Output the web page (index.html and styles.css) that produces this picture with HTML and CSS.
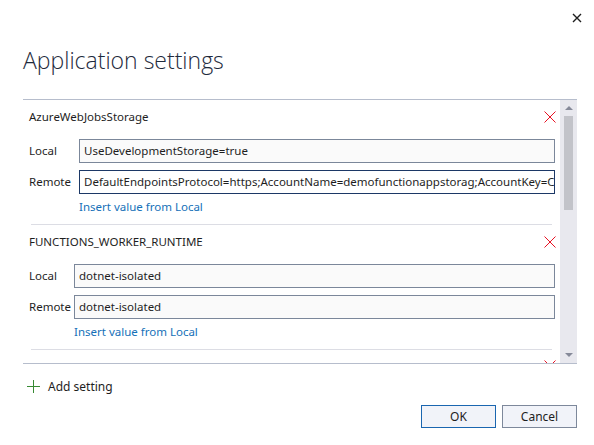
FILE: index.html
```html
<!DOCTYPE html>
<html>
<head>
<meta charset="utf-8">
<link rel="stylesheet" href="styles.css">
</head>
<body>
<div class="dialog">
  <div class="top">
    <svg class="close" width="10" height="10" viewBox="0 0 10 10"><path d="M1 1L9 9M9 1L1 9" stroke="#1e1e1e" stroke-width="1.4" fill="none"/></svg>
  </div>
  <h1 class="title">Application settings</h1>
  <div class="list">
    <div class="items">
      <div class="setting s1">
        <div class="name-row">
          <span class="name">AzureWebJobsStorage</span>
          <svg class="remove" width="12" height="12" viewBox="0 0 12 12"><path d="M0.5 0.5L11.5 11.5M11.5 0.5L0.5 11.5" stroke="#e81123" stroke-width="1" fill="none"/></svg>
        </div>
        <div class="fields">
          <label class="lbl">Local</label>
          <div class="input">UseDevelopmentStorage=true</div>
          <label class="lbl">Remote</label>
          <div class="input focus">DefaultEndpointsProtocol=https;AccountName=demofunctionappstorag;AccountKey=C</div>
          <span></span>
          <a class="link">Insert value from Local</a>
        </div>
        <div class="sep"></div>
      </div>
      <div class="setting s2">
        <div class="name-row">
          <span class="name">FUNCTIONS_WORKER_RUNTIME</span>
          <svg class="remove" width="12" height="12" viewBox="0 0 12 12"><path d="M0.5 0.5L11.5 11.5M11.5 0.5L0.5 11.5" stroke="#e81123" stroke-width="1" fill="none"/></svg>
        </div>
        <div class="fields">
          <label class="lbl">Local</label>
          <div class="input">dotnet-isolated</div>
          <label class="lbl">Remote</label>
          <div class="input">dotnet-isolated</div>
          <span></span>
          <a class="link">Insert value from Local</a>
        </div>
        <div class="sep"></div>
      </div>
      <div class="setting s3">
        <div class="name-row end">
          <svg class="remove" width="12" height="12" viewBox="0 0 12 12"><path d="M0.5 0.5L11.5 11.5M11.5 0.5L0.5 11.5" stroke="#e81123" stroke-width="1" fill="none"/></svg>
        </div>
      </div>
    </div>
    <div class="scrollbar">
      <div class="arrow up"></div>
      <div class="thumb"></div>
      <div class="track-fill"></div>
      <div class="arrow down"></div>
    </div>
  </div>
  <div class="add">
    <svg class="plus" width="13" height="13" viewBox="0 0 13 13"><path d="M6.5 0V13M0 6.5H13" stroke="#388a34" stroke-width="1" fill="none"/></svg>
    <span>Add setting</span>
  </div>
  <div class="buttons">
    <button class="btn default">OK</button>
    <button class="btn">Cancel</button>
  </div>
</div>
</body>
</html>
```

FILE: styles.css
```css
* { box-sizing: border-box; }
html, body {
  margin: 0;
  padding: 0;
  background: #ffffff;
}
body {
  font-family: "Noto Sans", "Open Sans", sans-serif;
  font-size: 11.5px;
  color: #1e1e1e;
  width: 594px;
  height: 445px;
  overflow: hidden;
}
.dialog {
  width: 594px;
  height: 445px;
  display: flex;
  flex-direction: column;
}
.top {
  height: 44px;
  display: flex;
  justify-content: flex-end;
  align-items: flex-start;
  padding: 13px 12px 0 0;
}
.title {
  margin: 0 0 23px 23px;
  font-family: "Open Sans", "Noto Sans", sans-serif;
  font-weight: 300;
  font-size: 23px;
  line-height: 32px;
  color: #1e2a3c;
}
.list {
  margin: 0 17px 0 23px;
  height: 265px;
  flex: none;
  border-top: 1px solid #b6bdcc;
  border-bottom: 1px solid #b6bdcc;
  display: flex;
}
.items {
  flex: 1;
  overflow: hidden;
}
.setting {
  padding: 9px 4px 0 6px;
}
.name-row {
  display: flex;
  justify-content: space-between;
  align-items: center;
  height: 16px;
  line-height: 16px;
}
.name-row.end { justify-content: flex-end; }
.s3 { padding-top: 8px; }
.remove { display: block; }
.fields {
  display: grid;
  grid-template-columns: 50px 1fr;
  row-gap: 7px;
  align-items: center;
  margin-top: 14px;
  padding-right: 1px;
}
.s2 .fields { grid-template-columns: 45px 1fr; }
.lbl {
  line-height: 16px;
}
.input {
  height: 24px;
  border: 1px solid #7b879a;
  background: #fafafa;
  padding: 0 4px;
  line-height: 22px;
  white-space: nowrap;
  overflow: hidden;
}
.input.focus {
  border-color: #1c3866;
  background: #ffffff;
}
.link {
  color: #1570b8;
  line-height: 16px;
  margin-top: -2px;
}
.sep {
  height: 1px;
  background: #dcdde4;
  margin: 9px 4px 0 2px;
}
.scrollbar {
  width: 17px;
  background: #e8e8ee;
  display: flex;
  flex-direction: column;
  align-items: center;
  padding: 6px 0 6px;
}
.arrow {
  width: 0;
  height: 0;
  border-left: 4px solid transparent;
  border-right: 4px solid transparent;
}
.arrow.up { border-bottom: 4px solid #868a99; }
.arrow.down { border-top: 4px solid #868a99; }
.thumb {
  width: 9px;
  height: 94px;
  margin-top: 6px;
  background: #c2c3c9;
}
.track-fill { flex: 1; }
.add {
  display: flex;
  align-items: center;
  gap: 8px;
  margin: 14px 0 0 27px;
  height: 16px;
  font-size: 12px;
}
.plus { display: block; }
.buttons {
  display: flex;
  justify-content: flex-end;
  gap: 6px;
  margin: 11px 17px 0 0;
}
.btn {
  width: 75px;
  height: 23px;
  font-family: "Noto Sans", "Open Sans", sans-serif;
  font-size: 12px;
  color: #1e1e1e;
  background: #f1f3f9;
  border: 1px solid #7d889b;
  padding: 0;
  line-height: 20px;
}
.btn.default {
  border-color: #1a66b0;
}
```
